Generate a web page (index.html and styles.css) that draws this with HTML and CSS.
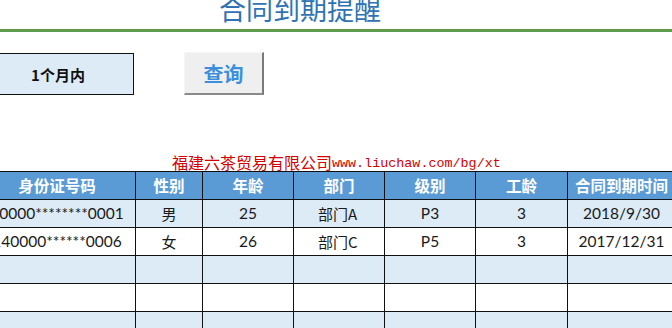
FILE: index.html
```html
<!DOCTYPE html>
<html lang="zh">
<head>
<meta charset="utf-8">
<link rel="stylesheet" href="styles.css">
</head>
<body>
<div class="sheet">
  <div class="title-bar">
    <h1 class="title">合同到期提醒</h1>
  </div>
  <div class="rule"></div>
  <div class="controls">
    <div class="select-box">1个月内</div>
    <div class="query-btn">查询</div>
  </div>
  <div class="watermark"><span class="wm-cn">福建六茶贸易有限公司</span><span class="wm-url">www.liuchaw.com/bg/xt</span></div>
  <table class="grid">
    <colgroup>
      <col class="c1"><col class="c2"><col class="c3"><col class="c4"><col class="c5"><col class="c6"><col class="c7">
    </colgroup>
    <thead>
      <tr><th>身份证号码</th><th>性别</th><th>年龄</th><th>部门</th><th>级别</th><th>工龄</th><th>合同到期时间</th></tr>
    </thead>
    <tbody>
      <tr class="odd"><td class="num">40000********0001</td><td>男</td><td class="num">25</td><td class="left">部门A</td><td class="num">P3</td><td class="num">3</td><td class="num">2018/9/30</td></tr>
      <tr class="even"><td class="num">140000******0006</td><td>女</td><td class="num">26</td><td class="left">部门C</td><td class="num">P5</td><td class="num">3</td><td class="num">2017/12/31</td></tr>
      <tr class="odd"><td></td><td></td><td></td><td></td><td></td><td></td><td></td></tr>
      <tr class="even"><td></td><td></td><td></td><td></td><td></td><td></td><td></td></tr>
      <tr class="odd"><td></td><td></td><td></td><td></td><td></td><td></td><td></td></tr>
    </tbody>
  </table>
</div>
</body>
</html>
```
FILE: styles.css
```css
html, body {
  margin: 0;
  padding: 0;
  background: #ffffff;
  overflow: hidden;
}
.sheet {
  width: 672px;
  height: 328px;
  overflow: hidden;
  font-family: "Noto Sans CJK SC", "Lato", sans-serif;
}
.title-bar {
  height: 29px;
  overflow: hidden;
  padding-left: 219px;
}
.title {
  margin: -9px 0 0 0;
  font-size: 27px;
  line-height: 36px;
  font-weight: 400;
  color: #2f73b3;
  letter-spacing: 0;
}
.rule {
  height: 3px;
  background: #5e9b4c;
}
.controls {
  display: flex;
  align-items: flex-start;
  padding-top: 21px;
  height: 99px;
}
.select-box {
  box-sizing: border-box;
  width: 136px;
  height: 42px;
  margin-left: -2px;
  border: 1px solid #111;
  background: #ddebf7;
  display: flex;
  align-items: center;
  justify-content: center;
  font-size: 15px;
  font-weight: 700;
  color: #111;
  padding-right: 16px;
}
.query-btn {
  box-sizing: border-box;
  margin-left: 50px;
  margin-top: -1px;
  width: 80px;
  height: 43px;
  background: #efefef;
  border-top: 1px solid #f6f6f6;
  border-left: 1px solid #f6f6f6;
  border-right: 2px solid #7a7a7a;
  border-bottom: 2px solid #8a8a8a;
  display: flex;
  align-items: center;
  justify-content: center;
  font-size: 20px;
  font-weight: 700;
  color: #3b8fdc;
}
.watermark {
  height: 19px;
  padding-left: 172px;
  color: #d40000;
  white-space: nowrap;
  display: flex;
  align-items: flex-end;
}
.wm-cn {
  font-size: 16px;
  line-height: 17px;
  letter-spacing: 0;
}
.wm-url {
  font-family: "Liberation Mono", monospace;
  font-size: 13.4px;
  line-height: 15px;
}
.grid {
  border-collapse: collapse;
  table-layout: fixed;
  margin-left: -22px;
  width: 697px;
}
.c1 { width: 157px; }
.c2 { width: 67px; }
.c3 { width: 91px; }
.c4 { width: 91px; }
.c5 { width: 91px; }
.c6 { width: 92px; }
.c7 { width: 108px; }
.grid th, .grid td {
  border: 1px solid #111;
  height: 27px;
  padding: 0;
  text-align: center;
  white-space: nowrap;
  overflow: hidden;
  font-size: 15px;
  line-height: 27px;
  color: #1a1a1a;
}
.grid th {
  background: #5b9bd5;
  color: #ffffff;
  font-weight: 700;
  font-size: 15.5px;
}
.grid td.num {
  font-family: "Lato", "Noto Sans CJK SC", sans-serif;
  font-size: 15.5px;
}
.grid td.left {
  text-align: left;
  padding-left: 24px;
}
.grid tr.odd td { background: #ddebf7; }
.grid tr.even td { background: #ffffff; }
```
